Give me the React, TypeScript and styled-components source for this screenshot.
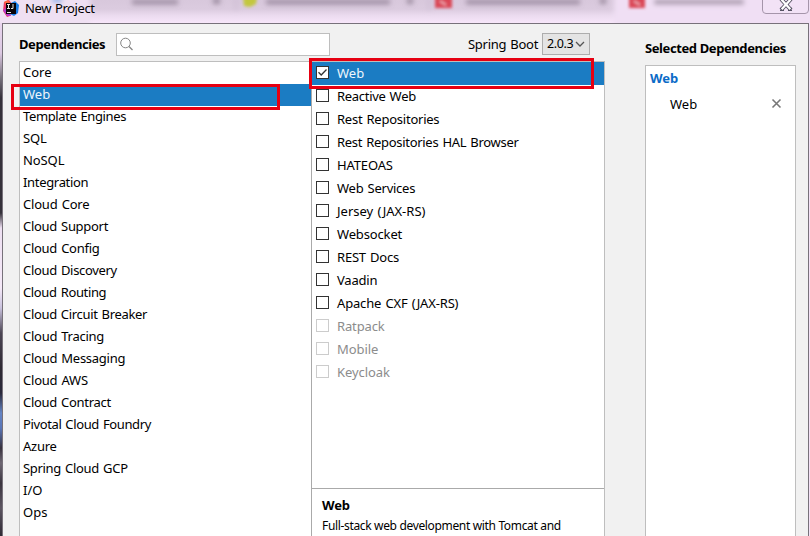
import React from "react";
import styled, { createGlobalStyle, css } from "styled-components";

const GlobalStyle = createGlobalStyle`
  * { box-sizing: border-box; }
  body { margin: 0; overflow: hidden; }
`;

const Desktop = styled.div`
  position: relative;
  width: 810px;
  height: 536px;
  overflow: hidden;
  display: flex;
  flex-direction: column;
  background: #f3e1f6;
  font: 13px/22px "Noto Sans", sans-serif;
  color: #000;
`;

const TitleBar = styled.header`
  position: relative;
  flex: 0 0 23px;
  display: flex;
  align-items: flex-start;
  padding-left: 3px;
  background: linear-gradient(#d8c8dc 0, #dbcbdf 9px, #ecdcf0 16px, #f7e6fa 23px);
  overflow: hidden;
`;

const Backdrop = styled.svg`
  position: absolute;
  inset: 0;
`;

const AppIcon = styled.svg`
  position: relative;
  flex: none;
`;

const Title = styled.h1`
  position: relative;
  margin: -3px 0 0 6px;
  font-size: 13px;
  font-weight: 400;
  line-height: 22px;
  letter-spacing: -0.4px;
  word-spacing: 1px;
`;

const CloseButton = styled.button`
  position: absolute;
  right: 1px;
  top: -8px;
  width: 47px;
  height: 22px;
  padding: 6px 0 0;
  border: 1px solid #a595aa;
  border-radius: 4px;
  background: rgba(244, 230, 248, 0.5);
`;

const Middle = styled.div`
  flex: 1;
  display: flex;
  min-height: 0;
`;

const Edge = styled.div`
  flex: 0 0 2px;
  background: linear-gradient(
    #e9d6ee 0, #dcc9e2 30px, #77717c 55px, #35313a 75px, #35313a 190px,
    #eee0f2 205px, #f5e9f8 265px, #c9c2dd 285px, #4c4654 310px, #2f2a34 345px,
    #29283a 370px, #6484c4 390px, #5a76b8 405px, #38323e 425px, #6e6773 440px,
    #3b3540 460px, #5d5662 485px, #2f2a34 513px
  );
`;

const Frame = styled.main`
  flex: 0 0 807px;
  display: flex;
  border: solid #77717a;
  border-width: 1px 1px 0;
  background: #f1f1f1;
`;

const Chooser = styled.section`
  flex: 0 0 586px;
  margin-left: 16px;
  display: flex;
  flex-direction: column;
`;

const Toolbar = styled.div`
  flex: 0 0 37px;
  display: flex;
  align-items: flex-start;
  padding-top: 9px;
`;

const Heading = styled.h2<{ $width?: number; $spacing?: number }>`
  margin: 0;
  width: ${(p) => (p.$width ? `${p.$width}px` : "auto")};
  font-size: 13px;
  line-height: 22px;
  font-weight: 700;
  white-space: nowrap;
  letter-spacing: ${(p) => p.$spacing ?? -0.15}px;
`;

const SearchBox = styled.label`
  width: 214px;
  height: 23px;
  padding: 3px 0 0 3px;
  display: flex;
  border: 1px solid #bebebe;
  background: #fff;
`;

const SearchInput = styled.input`
  flex: 1;
  min-width: 0;
  border: 0;
  outline: 0;
  background: transparent;
`;

const VersionLabel = styled.span`
  margin-left: auto;
  width: 74px;
  white-space: nowrap;
  letter-spacing: -0.28px;
  word-spacing: 1px;
`;

const VersionSelect = styled.button`
  width: 48px;
  height: 22px;
  margin-right: 15px;
  padding: 0 4px 0 4px;
  display: flex;
  align-items: center;
  justify-content: space-between;
  border: 1px solid #adadad;
  background: #e4e4e4;
  font: 12.5px/20px "Noto Sans", sans-serif;
  letter-spacing: -0.4px;
`;

const Lists = styled.div`
  flex: 1;
  min-height: 0;
  display: flex;
  border: solid #bebebe;
  border-width: 1px 1px 0;
  background: #fff;
`;

const selectedRow = css`
  background: #1b7cc3;
  color: #eef6fc;
`;

const Categories = styled.ul`
  flex: 0 0 291px;
  margin: 0;
  padding: 0;
  list-style: none;
`;

const Category = styled.li<{ $selected?: boolean; $spacing: number }>`
  height: 22px;
  padding-left: 3px;
  line-height: 20px;
  white-space: nowrap;
  letter-spacing: ${(p) => p.$spacing}px;
  word-spacing: 1px;
  ${(p) => p.$selected && selectedRow}
`;

const Detail = styled.div`
  flex: 1;
  display: flex;
  flex-direction: column;
  border-left: 1px solid #aaa;
`;

const Options = styled.ul`
  flex: 0 0 426px;
  margin: 0;
  padding: 0;
  list-style: none;
`;

const Option = styled.li<{ $selected?: boolean; $disabled?: boolean; $spacing: number }>`
  height: 23px;
  padding-left: 4px;
  display: flex;
  align-items: flex-start;
  gap: 8px;
  line-height: 22px;
  white-space: nowrap;
  letter-spacing: ${(p) => p.$spacing}px;
  word-spacing: 1px;
  color: ${(p) => (p.$disabled ? "#8c8c8c" : "#000")};
  ${(p) => p.$selected && selectedRow}
`;

const Checkbox = styled.span<{ $disabled?: boolean }>`
  width: 13px;
  height: 13px;
  margin-top: 4px;
  display: flex;
  border: 1px solid ${(p) => (p.$disabled ? "#ccc" : "#333")};
  background: #fff;
`;

const Description = styled.article`
  flex: 1;
  padding: 5px 10px;
  border-top: 1px solid #aaa;
`;

const DescriptionText = styled.p`
  margin: 0;
  font-size: 12px;
  line-height: 19px;
  letter-spacing: -0.34px;
  white-space: nowrap;
`;

const Selected = styled.aside`
  flex: 0 0 151px;
  margin-left: 40px;
  padding-top: 13px;
  display: flex;
  flex-direction: column;
`;

const SelectedPanel = styled.div`
  flex: 1;
  margin-top: 6px;
  border: solid #bebebe;
  border-width: 1px 1px 0;
  background: #fff;
`;

const GroupName = styled.h3`
  margin: 0;
  padding: 1px 0 0 4px;
  font-size: 13px;
  line-height: 23px;
  color: #0b6bc7;
`;

const SelectedItem = styled.div`
  height: 27px;
  padding: 0 13px 0 24px;
  display: flex;
  align-items: center;
  justify-content: space-between;
`;

const Highlight = styled.div<{ $x: number; $y: number; $w: number; $h: number }>`
  position: absolute;
  left: ${(p) => p.$x}px;
  top: ${(p) => p.$y}px;
  width: ${(p) => p.$w}px;
  height: ${(p) => p.$h}px;
  border: 3px solid #e60012;
  pointer-events: none;
`;

// Each entry pairs a label with its tracking in pixels.
const categories: [string, number][] = [
  ["Core", 0], ["Web", 0], ["Template Engines", -0.38], ["SQL", -0.2], ["NoSQL", -0.1],
  ["Integration", -0.32], ["Cloud Core", -0.2], ["Cloud Support", -0.3], ["Cloud Config", -0.28],
  ["Cloud Discovery", -0.32], ["Cloud Routing", -0.36], ["Cloud Circuit Breaker", -0.33],
  ["Cloud Tracing", -0.26], ["Cloud Messaging", -0.26], ["Cloud AWS", -0.22],
  ["Cloud Contract", -0.3], ["Pivotal Cloud Foundry", -0.38], ["Azure", -0.25],
  ["Spring Cloud GCP", -0.31], ["I/O", 0], ["Ops", 0],
];

const options: [string, number][] = [
  ["Web", 0], ["Reactive Web", -0.3], ["Rest Repositories", -0.24],
  ["Rest Repositories HAL Browser", -0.3], ["HATEOAS", -0.15], ["Web Services", -0.25],
  ["Jersey (JAX-RS)", 0], ["Websocket", -0.15], ["REST Docs", -0.2], ["Vaadin", -0.2],
  ["Apache CXF (JAX-RS)", -0.16], ["Ratpack", -0.14], ["Mobile", -0.08], ["Keycloak", -0.08],
];
const disabledOptions = ["Ratpack", "Mobile", "Keycloak"];

export default function App() {
  return (
    <Desktop>
      <GlobalStyle />
      <TitleBar>
        <Backdrop width="810" height="23">
          <defs>
            <filter id="soft" x="-20%" y="-100%" width="140%" height="300%">
              <feGaussianBlur stdDeviation="2.6" />
            </filter>
            <filter id="softMark" x="-20%" y="-100%" width="140%" height="300%">
              <feGaussianBlur stdDeviation="1.4" />
            </filter>
          </defs>
          <g filter="url(#soft)">
            <path d="M-6 -6H90V30H-6Z" fill="#efe0f2" />
            <path d="M614 -6H816V30H614Z" fill="#f0dff4" />
            <path d="M236 -2V10M429 -2V10" stroke="#cbbad0" strokeWidth="2" />
            <path d="M132 2H178M266 2H390M466 2H580M654 2H744" stroke="#85768a" strokeWidth="5" opacity=".7" />
            <path d="M213 1H220M407 1H413M600 1H606" stroke="#807285" strokeWidth="6" opacity=".7" />
            <path d="M52 0H62" stroke="#84aee8" strokeWidth="5" />
          </g>
          <g filter="url(#softMark)">
            <path d="M243 -3H257L256 4 250 7 244 6Z" fill="#c3c73c" />
            <path d="M435 -3H452V8H435Z" fill="#da4656" />
            <path d="M629 -3H645V8H629Z" fill="#da4656" />
            <path d="m440 1 6 4M634 1l6 4" stroke="#efb3bc" strokeWidth="2" />
          </g>
        </Backdrop>
        <AppIcon width="16" height="17" viewBox="0 0 16 17">
          <path d="M1 2 6 0 9 4 7 16 4 17 0 11Z" fill="#ed3b69" />
          <path d="M0 10 5 7 8 16 4 16Z" fill="#b43acb" />
          <path d="M8 3 12 1 16 5 15 13 11 16 7 14Z" fill="#187ee8" />
          <path d="M1 2 5 0 7 3 3 5Z" fill="#fb6840" />
          <path d="M3 3H13V14H3Z" fill="#080508" />
          <path d="M4 4.5H7M5.5 4.5V8.5M4 8.5H7M10 4V8.5H8M4 12.5H8" fill="none" stroke="#e8e8e8" strokeWidth="1" />
        </AppIcon>
        <Title>New Project</Title>
        <CloseButton aria-label="Close">
          <svg width="14" height="12" viewBox="0 0 14 12">
            <path d="M2 0 7 5.5 12 0M2 11 7 5.5 12 11M1 10.5H5M9 10.5H13" fill="none" stroke="#555262" strokeWidth="4" />
            <path d="M2.5 .5 7 5.5 11.5 .5M2.7 10.3 7 5.5 11.3 10.3" fill="none" stroke="#fff" strokeWidth="2.2" />
          </svg>
        </CloseButton>
      </TitleBar>
      <Middle>
        <Edge />
        <Frame>
          <Chooser>
            <Toolbar>
              <Heading $width={97} $spacing={-0.4}>Dependencies</Heading>
              <SearchBox>
                <svg width="14" height="14" viewBox="0 0 14 14" fill="none" stroke="#858585">
                  <circle cx="5.5" cy="6" r="4.8" />
                  <path d="m9 9.5 3.5 3.5" strokeWidth="1.3" />
                </svg>
                <SearchInput aria-label="Search dependencies" />
              </SearchBox>
              <VersionLabel>Spring Boot</VersionLabel>
              <VersionSelect>
                2.0.3
                <svg width="10" height="7" viewBox="0 0 10 7">
                  <path d="m1 1 4 4 4-4" fill="none" stroke="#555" strokeWidth="1.3" />
                </svg>
              </VersionSelect>
            </Toolbar>
            <Lists>
              <Categories>
                {categories.map(([name, spacing]) => (
                  <Category key={name} $selected={name === "Web"} $spacing={spacing}>
                    <span>{name}</span>
                  </Category>
                ))}
              </Categories>
              <Detail>
                <Options>
                  {options.map(([name, spacing]) => {
                    const disabled = disabledOptions.includes(name);
                    return (
                      <Option key={name} $selected={name === "Web"} $disabled={disabled} $spacing={spacing}>
                        <Checkbox $disabled={disabled}>
                          {name === "Web" && (
                            <svg width="11" height="11" viewBox="0 0 11 11">
                              <path d="M1.5 5.3 4.2 8 9.5 2.5" fill="none" stroke="#333" strokeWidth="1.3" />
                            </svg>
                          )}
                        </Checkbox>
                        <span>{name}</span>
                      </Option>
                    );
                  })}
                </Options>
                <Description>
                  <Heading>Web</Heading>
                  <DescriptionText>Full-stack web development with Tomcat and</DescriptionText>
                </Description>
              </Detail>
            </Lists>
          </Chooser>
          <Selected>
            <Heading $spacing={-0.4}>Selected Dependencies</Heading>
            <SelectedPanel>
              <GroupName>Web</GroupName>
              <SelectedItem>
                <span>Web</span>
                <svg width="11" height="11" viewBox="0 0 11 11">
                  <path d="m1.5 1.5 8 8m0-8-8 8" stroke="#777" strokeWidth="1.6" />
                </svg>
              </SelectedItem>
            </SelectedPanel>
          </Selected>
        </Frame>
      </Middle>
      <Highlight $x={11} $y={84} $w={269} $h={26} />
      <Highlight $x={309} $y={58} $w={285} $h={31} />
    </Desktop>
  );
}
